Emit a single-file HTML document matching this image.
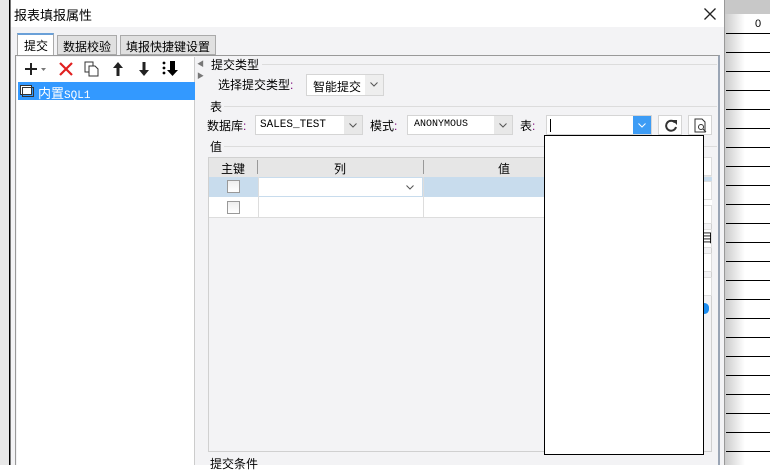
<!DOCTYPE html>
<html><head><meta charset="utf-8"><style>
*{box-sizing:border-box;margin:0;padding:0}
body{width:770px;height:465px;position:relative;overflow:hidden;background:#fff;font-family:"Liberation Sans","Noto Sans CJK SC",sans-serif;font-size:12px;color:#000}
.a{position:absolute;white-space:nowrap}
.hl{position:absolute;height:1px;background:#000}
.m{font-family:"Liberation Mono",monospace;font-size:11px}
.cb{position:absolute;background:#fff;border:1px solid #d5d5d5;white-space:nowrap}
.dd{position:absolute;top:0;right:0;bottom:0;width:18px;background:#e8e8e8}
.dd svg{position:absolute;left:5px;top:7px}
.lbl{position:absolute;font-size:12px;white-space:nowrap}
.sep{position:absolute;height:1px;background:#dcdcdc}
.tab{position:absolute;background:#e0e0e0;border:1px solid #aaa;font-size:12px;white-space:nowrap}
</style></head><body>
<div class="a" style="left:725px;top:0;width:45px;height:465px;background:linear-gradient(90deg,#ccc,#fff 20px)"></div>
<div class="a" style="left:725px;top:0;width:45px;height:14px;background:#c8c8c8"></div>
<div class="a" style="left:755px;top:18px;font-size:11px">0</div>
<div id="lines"></div>
<div class="a" style="left:0;top:0;width:11px;height:465px;background:#e8e8e8"></div>
<div class="a" style="left:9px;top:0;width:1px;height:465px;background:#000"></div>
<div class="a" style="left:10px;top:0;width:715px;height:465px;background:#f3f3f5;border-left:1px solid #777;border-right:1px solid #999"></div>
<div class="a" style="left:11px;top:0;width:713px;height:27px;background:#fff"></div>
<div class="a" style="left:14px;top:5px;font-size:13px">报表填报属性</div>
<svg class="a" style="left:704px;top:8px" width="12" height="12"><path d="M0.5 0.5l11 11M11.5 0.5l-11 11" stroke="#222" stroke-width="1.3"/></svg>
<!-- tabs -->
<div class="tab" style="left:17px;top:33px;width:37px;height:23px;background:#fff;border-top:2px solid #6aa0d8;border-bottom:none;padding:2px 0 0 6px">提交</div>
<div class="tab" style="left:57px;top:35px;width:60px;height:20px;padding:2px 0 0 5px">数据校验</div>
<div class="tab" style="left:120px;top:35px;width:96px;height:20px;padding:2px 0 0 5px">填报快捷键设置</div>
<div class="a" style="left:15px;top:55px;width:705px;height:410px;border:1px solid #999;border-right:2px solid #9aa5b5;border-bottom:none;background:#f3f3f5"></div>
<div class="a" style="left:17px;top:57px;width:178px;height:408px;background:#fff;border-right:1px solid #ccc"></div>
<svg class="a" style="left:24px;top:62px" width="28" height="14"><path d="M1 7h12M7 1v12" stroke="#222" stroke-width="2"/><path d="M17 6h5l-2.5 3z" fill="#777"/></svg>
<svg class="a" style="left:59px;top:62px" width="14" height="14"><path d="M1 1l12 12M13 1L1 13" stroke="#e02020" stroke-width="2.2"/></svg>
<svg class="a" style="left:84px;top:61px" width="16" height="16"><rect x="1" y="1" width="8" height="10" fill="#fff" stroke="#333"/><path d="M5 5h6l3 3v7H5z" fill="#fff" stroke="#333"/></svg>
<svg class="a" style="left:112px;top:61px" width="12" height="16"><path d="M6 1L1 7h3.5v8h3V7H11z" fill="#222"/></svg>
<svg class="a" style="left:138px;top:61px" width="12" height="16"><path d="M6 15L1 9h3.5V1h3v8H11z" fill="#222"/></svg>
<svg class="a" style="left:162px;top:60px" width="18" height="18"><circle cx="2" cy="3" r="1.4"/><circle cx="2" cy="8" r="1.4"/><circle cx="2" cy="13" r="1.4"/><path d="M8 1h5v9h3l-5.5 6L5 10h3z"/></svg>
<div class="a" style="left:18px;top:82px;width:177px;height:18px;background:#3399ff"></div>
<svg class="a" style="left:20px;top:85px" width="14" height="12"><rect x="0.5" y="0.5" width="11" height="9" fill="#fff" stroke="#333"/><rect x="2.5" y="2.5" width="11" height="9" fill="none" stroke="#333"/></svg>
<div class="a" style="left:38px;top:83px;color:#fff;font-size:13px">内置<span class="m">SQL1</span></div>
<div class="a" style="left:197px;top:59px;font-size:7px;color:#777">◀</div>
<div class="a" style="left:197px;top:71px;font-size:7px;color:#777">▶</div>
<div class="lbl" style="left:211px;top:56px">提交类型</div><div class="sep" style="left:262px;top:64px;width:455px"></div>
<div class="lbl" style="left:218px;top:76px">选择提交类型<span style="color:#707">:</span></div>
<div class="cb" style="left:306px;top:74px;width:78px;height:22px;padding:3px 0 0 6px">智能提交<div class="dd" style="background:#eee"><svg width="8" height="5"><path d="M0.5 0.5l3.5 3.5 3.5-3.5" fill="none" stroke="#555"/></svg></div></div>
<div class="lbl" style="left:210px;top:98px">表</div><div class="sep" style="left:224px;top:106px;width:493px"></div>
<div class="lbl" style="left:207px;top:117px">数据库<span style="color:#707">:</span></div>
<div class="cb m" style="left:255px;top:115px;width:108px;height:20px;padding:3px 0 0 4px">SALES_TEST<div class="dd"><svg width="8" height="5"><path d="M0.5 0.5l3.5 3.5 3.5-3.5" fill="none" stroke="#555"/></svg></div></div>
<div class="lbl" style="left:370px;top:117px">模式<span style="color:#707">:</span></div>
<div class="cb m" style="left:407px;top:115px;width:106px;height:20px;padding:3px 0 0 6px;font-size:10px">ANONYMOUS<div class="dd"><svg width="8" height="5"><path d="M0.5 0.5l3.5 3.5 3.5-3.5" fill="none" stroke="#555"/></svg></div></div>
<div class="lbl" style="left:520px;top:117px">表<span style="color:#707">:</span></div>
<div class="cb" style="left:546px;top:115px;width:106px;height:20px"><div class="a" style="left:3px;top:3px;width:1px;height:13px;background:#000"></div><div class="dd" style="background:#3d9cf5"><svg width="8" height="5"><path d="M0.5 0.5l3.5 3.5 3.5-3.5" fill="none" stroke="#fff"/></svg></div></div>
<div class="cb" style="left:658px;top:115px;width:24px;height:20px"><svg class="a" style="left:5px;top:2px" width="14" height="15"><path d="M11 4.5A5 5 0 1 0 12 9" fill="none" stroke="#333" stroke-width="2"/><path d="M8 2h5v5z" fill="#333"/></svg></div>
<div class="cb" style="left:688px;top:115px;width:24px;height:20px"><svg class="a" style="left:5px;top:2px" width="14" height="15"><path d="M1 1h7l3 3v10H1z" fill="none" stroke="#333"/><circle cx="7" cy="9" r="2.5" fill="none" stroke="#333"/><path d="M9 11l3 3" stroke="#333"/></svg></div>
<div class="lbl" style="left:210px;top:138px">值</div><div class="sep" style="left:224px;top:146px;width:493px"></div>
<div class="a" style="left:208px;top:157px;width:504px;height:295px;border:1px solid #d0d0d0;background:#f3f3f5"></div>
<div class="a" style="left:209px;top:158px;width:503px;height:19px;background:#e6e6e6"></div>
<div class="a" style="left:221px;top:160px">主键</div>
<div class="a" style="left:257px;top:160px;width:1px;height:14px;background:#999"></div>
<div class="a" style="left:334px;top:160px">列</div>
<div class="a" style="left:423px;top:160px;width:1px;height:14px;background:#999"></div>
<div class="a" style="left:498px;top:160px">值</div>
<div class="a" style="left:209px;top:177px;width:503px;height:20px;background:#c8dced"></div>
<div class="a" style="left:259px;top:178px;width:163px;height:18px;background:#fff"></div>
<svg class="a" style="left:406px;top:185px" width="8" height="5"><path d="M0.5 0.5l3.5 3.5 3.5-3.5" fill="none" stroke="#555"/></svg>
<div class="a" style="left:209px;top:197px;width:503px;height:21px;background:#fff;border-bottom:1px solid #ddd"></div>
<div class="a" style="left:258px;top:177px;width:1px;height:41px;background:#ddd"></div>
<div class="a" style="left:423px;top:177px;width:1px;height:41px;background:#ddd"></div>
<div class="a" style="left:227px;top:180px;width:13px;height:13px;border:1px solid #999;background:linear-gradient(#eee,#fff)"></div>
<div class="a" style="left:227px;top:201px;width:13px;height:13px;border:1px solid #999;background:linear-gradient(#eee,#fff)"></div>
<div class="lbl" style="left:210px;top:455px">提交条件</div>
<div class="a" style="left:700px;top:157px;width:12px;height:19px;border:1px solid #ddd;background:#fff"></div>
<div class="a" style="left:700px;top:181px;width:12px;height:19px;border:1px solid #ddd;background:#fff"></div>
<div class="a" style="left:700px;top:205px;width:12px;height:19px;border:1px solid #ddd;background:#fff"></div>
<div class="a" style="left:700px;top:229px;width:12px;height:19px;border:1px solid #ddd;background:#fff;font-size:12px;line-height:17px;overflow:hidden">目</div>
<div class="a" style="left:700px;top:253px;width:12px;height:19px;border:1px solid #ddd;background:#fff"></div>
<div class="a" style="left:700px;top:277px;width:12px;height:19px;border:1px solid #ddd;background:#fff"></div>
<div class="a" style="left:700px;top:303px;width:9px;height:11px;border-radius:5px;background:#1a8cf0"></div>
<div class="a" style="left:544px;top:135px;width:160px;height:320px;background:#fff;border:1px solid #000"></div>
<script>
var s='';for(var y=33;y<465;y+=19){s+='<div class="hl" style="left:726px;top:'+y+'px;width:44px"></div><div class="hl" style="left:0;top:'+y+'px;width:10px"></div>';}
document.getElementById('lines').innerHTML=s;
</script>
</body></html>
